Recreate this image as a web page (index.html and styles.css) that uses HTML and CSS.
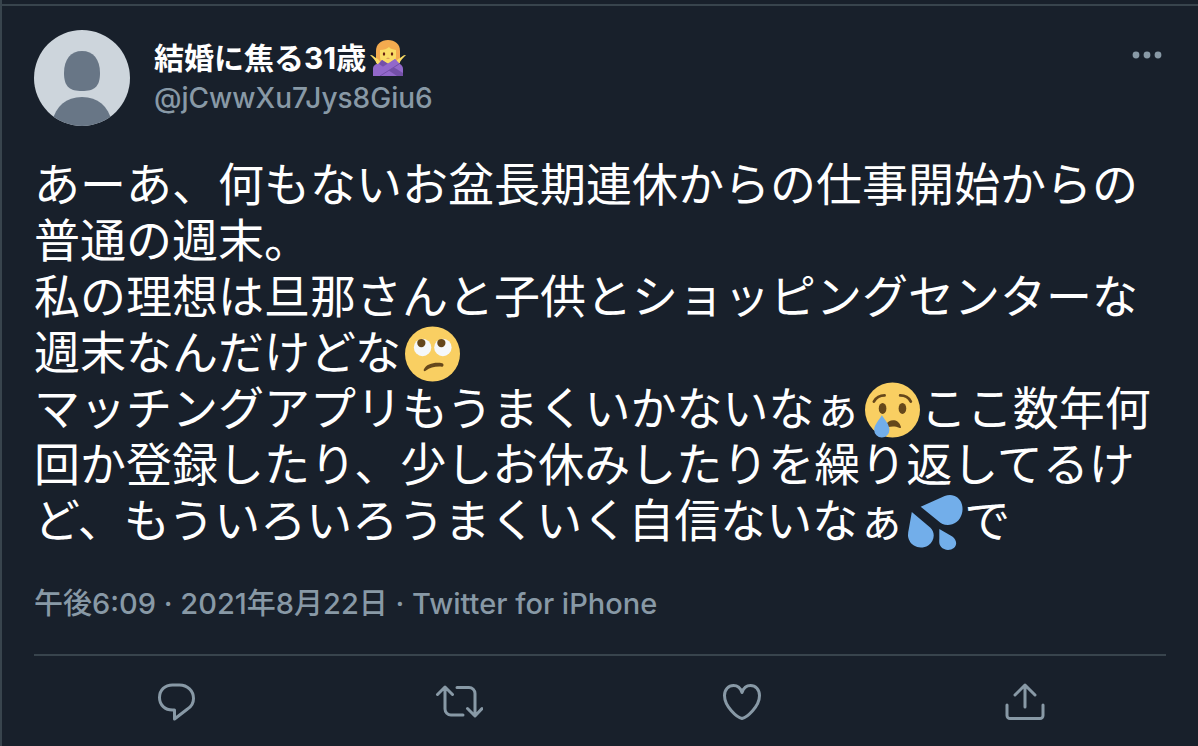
FILE: index.html
```html
<!DOCTYPE html>
<html lang="ja">
<head>
<meta charset="utf-8">
<title>Tweet</title>
<link rel="stylesheet" href="styles.css">
</head>
<body>
    <article class="tweet">
        <header class="tweet-header">
            <svg class="avatar" viewBox="0 0 96 96" role="img" aria-label="avatar">
                <defs><clipPath id="circle"><circle cx="48" cy="48" r="48"/></clipPath></defs>
                <g clip-path="url(#circle)">
                    <rect width="96" height="96" fill="#cdd5dc"/>
                    <path d="M30 43C30 29 37 21 48 21s18 8 18 22c0 14-6 18-18 18s-18-4-18-18z" fill="#687686"/>
                    <path d="M18 92C22 76 32 67 48 67s26 9 30 25v6H18z" fill="#687686"/>
                </g>
            </svg>
            <div class="user">
                <div class="name">結婚に焦る31歳<svg class="name-emoji" viewBox="0 0 36 36" role="img" aria-label="🙅‍♀️">
                    <path d="M6 23V11C6 4 11 0 18 0s12 4 12 11v12z" fill="#f4ab4f"/>
                    <path d="M1 15c2 0 4 3 7 4l3 4-3 5c-1-5-2-7-7-12-1-1-1-1 0-1zM35 15c-2 0-4 3-7 4l-3 4 3 5c1-5 2-7 7-12 1-1 1-1 0-1z" fill="#fadc65"/>
                    <path d="M10 10c4 0 7-1 9-3 1 2 4 2 7 3v6c0 6-3 9-8 9s-8-3-8-9z" fill="#fadc65"/>
                    <ellipse cx="14" cy="14" rx="1.2" ry="1.7" fill="#662113"/>
                    <ellipse cx="22" cy="14" rx="1.2" ry="1.7" fill="#662113"/>
                    <path d="M16 18.500q2-1.500 4 0z" fill="#c1694f"/>
                    <path d="M3 36v-7c0-3 2-5 5-5l4-4 6 4 7-5 5 5c2 1 3 3 3 5v7z" fill="#9268ca"/>
                    <path d="M12 20l-3 4 18 12h6v-3z" fill="#7450a8"/>
                    <path d="M25 19l4 5L10 36H3v-3z" fill="#9268ca"/>
                    <path d="M29 24L10 36" fill="none" stroke="#7450a8"/>
                </svg></div>
                <a class="handle" href="#">@jCwwXu7Jys8Giu6</a>
            </div>
            <button class="more" type="button" aria-label="もっと見る">
                <svg width="30" height="8" viewBox="0 0 30 8"><circle cx="4" cy="4" r="3.4"/><circle cx="15" cy="4" r="3.4"/><circle cx="26" cy="4" r="3.4"/></svg>
            </button>
        </header>

        <p class="text">あーあ、何もないお盆長期連休からの仕事開始からの普通の週末。<br>私の理想は旦那さんと子供とショッピングセンターな週末なんだけどな<svg class="emoji" viewBox="0 0 36 36" role="img" aria-label="🙄">
            <circle cx="18" cy="18" r="18" fill="#f9cf62"/>
            <circle cx="11.5" cy="13.7" r="5.7" fill="#f5f8fa"/>
            <circle cx="24.8" cy="13.7" r="5.7" fill="#f5f8fa"/>
            <circle cx="10.7" cy="10.8" r="2.7" fill="#65471b"/>
            <circle cx="23.8" cy="10.8" r="2.7" fill="#65471b"/>
            <path d="M12.300 28.200c1.500-3.800 7-5 12-4.200 1.300.3 1.200 2.300-.2 2.300-4.500-.2-7.500.3-10.600 2.700-.8.600-1.500 0-1.200-.8z" fill="#65471b"/>
        </svg><br>マッチングアプリもうまくいかないなぁ<svg class="emoji" viewBox="0 0 36 36" role="img" aria-label="😢">
            <circle cx="18" cy="18" r="18" fill="#f9cf62"/>
            <ellipse cx="11.500" cy="17" rx="2.500" ry="3.600" fill="#65471b"/>
            <ellipse cx="24.500" cy="17" rx="2.500" ry="3.600" fill="#65471b"/>
            <path d="M5.800 12.500c1.500-2.500 4-4 7-4M23 8.500c3.200 0 5.700 1.500 7 4" fill="none" stroke="#65471b" stroke-width="1.800" stroke-linecap="round"/>
            <path d="M14 27.500c1-3.500 8-4.500 9.500 1.500.2 1-.5 1-1.200.6-2-1-4.500-1-7.300-.5z" fill="#65471b"/>
            <path d="M11 21.500c2.300 3.300 5 6.300 5 9.500a5 5 0 0 1-10 0c0-3 3-6.200 5-9.500z" fill="#72aeea"/>
        </svg>ここ数年何回か登録したり、少しお休みしたりを繰り返してるけど、もういろいろうまくいく自信ないなぁ<svg class="emoji" viewBox="0 0 36 36" role="img" aria-label="💦">
            <path d="M8.300 8L24 1c5-2 10 .5 11.300 5.500C36.800 12 34 18 29 19.500c-4 1.300-7-.2-9-2zM2.500 11.500l12.200 10.300c3.500 3.500 2.500 9-1.500 11.500-4.500 2.700-10.500 1-12.200-3-1.500-2.800-1-5-.5-7.500zM20.500 22.500l8.500 5c3 2.300 3.300 5.500 1 7.500-2.500 2-6.500 1.500-8.300-.6-1.500-1.700-1.300-3.500-1.200-5.400z" fill="#72aeea"/>
        </svg>で</p>

        <div class="meta"><a href="#">午後6:09 · 2021年8月22日</a> · <a href="#">Twitter for iPhone</a></div>

        <div class="actions">
            <button type="button" aria-label="返信">
                <svg viewBox="0 0 48 48"><path d="M20.500 7h7c8 0 14 6 14 13.500 0 4.500-2 8-6 10.500L22.500 41v-9h-2C13 32 7.500 27 7.500 19.500S13 7 20.500 7z"/></svg>
            </button>
            <button type="button" aria-label="リツイート">
                <svg viewBox="0 0 48 48"><path d="M2.500 16.500L10 9l7.500 7.500M10 9v22a6 6 0 0 0 6 6h12M22 9.500h12a6 6 0 0 1 6 6V37M32.500 30.500L40 38l7-7.500"/></svg>
            </button>
            <button type="button" aria-label="いいね">
                <svg viewBox="0 0 48 48"><path d="M24 40.500C19 39.500 6.500 28.500 6.500 17.500 6.500 11.500 10.500 7.500 15.500 7.500c4 0 7 2.500 8.500 7 1.500-4.500 4.500-7 8.500-7 5 0 9 4 9 10 0 11-12.500 22-17.500 23z"/></svg>
            </button>
            <button type="button" aria-label="共有">
                <svg viewBox="0 0 48 48"><path d="M14 17L24 7l10 10M24 7v22M6 27v10.500a3 3 0 0 0 3 3h30a3 3 0 0 0 3-3V27"/></svg>
            </button>
        </div>
    </article>
</body>
</html>
```
FILE: styles.css
```css
* {
    box-sizing: border-box;
}

body {
    margin: 0;
    padding-top: 4px;
    min-height: 100vh;
    background-color: #18202b;
    border-left: 2px solid #38444d;
    color: #fff;
    font-family: Inter, "Noto Sans CJK JP", sans-serif;
}

.tweet {
    border-top: 2px solid #38444d;
    padding: 24px 32px 0;
}

.tweet-header {
    display: flex;
    align-items: flex-start;
}

.avatar {
    width: 96px;
    height: 96px;
    margin-right: 24px;
}

.user {
    flex: 1;
    padding-top: 8px;
    line-height: 40px;
}

.name {
    display: flex;
    align-items: center;
    font-size: 30px;
    font-weight: 700;
}

.name-emoji {
    width: 36px;
    height: 36px;
    margin-left: 4px;
}

a {
    color: inherit;
    text-decoration: none;
}

.handle,
.meta {
    color: #8899a6;
    font-weight: 500;
}

.handle {
    font-size: 28px;
}

button {
    display: flex;
    padding: 0;
    border: none;
    background: none;
    color: #8899a6;
    cursor: pointer;
}

.more {
    padding: 21px 4px;
    fill: #8899a6;
}

.text {
    margin: 27px 0 0;
    font-family: "Noto Sans CJK JP", sans-serif;
    font-size: 46px;
    line-height: 56px;
}

/* negative margins keep the emoji from stretching its line */
.emoji {
    width: 55px;
    height: 56px;
    margin: -8px 1px -8px 4px;
    vertical-align: -5px;
}

.meta {
    padding: 40px 0 31px;
    font-size: 29px;
    line-height: 38px;
}

.actions {
    display: flex;
    border-top: 2px solid #38444d;
    padding-top: 22px;
}

.actions button {
    flex: 1;
    justify-content: center;
}

.actions svg {
    width: 48px;
    height: 48px;
    fill: none;
    stroke: #8899a6;
    stroke-width: 3;
    stroke-linecap: round;
    stroke-linejoin: round;
}
```
